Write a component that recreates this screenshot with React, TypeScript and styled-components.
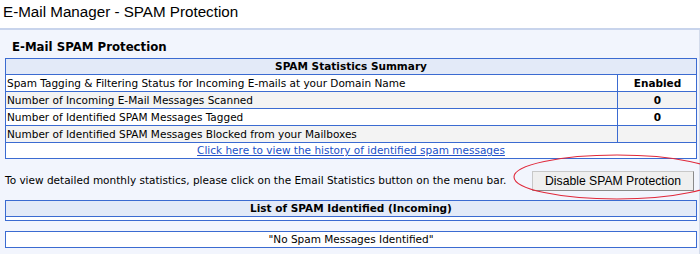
import React from 'react';
import styled, { createGlobalStyle } from 'styled-components';

const Global = createGlobalStyle`
  html, body { margin: 0; padding: 0; background: #fff; }
  body { font-family: "DejaVu Sans", Verdana, sans-serif; font-size: 10.5px; color: #000; }
`;

const Page = styled.div`
  width: 700px;
  height: 254px;
  overflow: hidden;
  display: flex;
  flex-direction: column;
`;

const Title = styled.h1`
  margin: 0;
  height: 30px;
  box-sizing: border-box;
  padding: 3px 0 0 3px;
  font: 15.2px/18px "Liberation Sans", Arial, sans-serif;
  color: #000;
  border-bottom: 2px solid #c8d4ec;
`;

const Panel = styled.div`
  flex: 1;
  background: #f2f5fd;
  padding: 0 2px 0 5px;
  border-right: 1px solid #d3dbeb;
  position: relative;
  display: flex;
  flex-direction: column;
`;

const Heading = styled.h2`
  margin: 10px 0 4px 7px;
  font: bold 11.75px/14px "DejaVu Sans", Verdana, sans-serif;
`;

const Table = styled.table<{ $mt?: number }>`
  width: 692px;
  border-collapse: collapse;
  margin-top: ${p => p.$mt ?? 0}px;
  border: 1px solid #3b6bd1;
  background: #fff;
`;

const HeadCell = styled.th`
  background: #e3eaf8;
  border: 1px solid #3b6bd1;
  height: 15px;
  padding: 0;
  font: bold 10.5px/15px "DejaVu Sans", Verdana, sans-serif;
  text-align: center;
`;

const Cell = styled.td<{ $gray?: boolean; $value?: boolean; $h?: number }>`
  background: ${p => (p.$gray ? '#f3f3f3' : '#fff')};
  border: 1px solid #3b6bd1;
  height: ${p => p.$h ?? 16}px;
  padding: 0 0 0 1px;
  line-height: 15px;
  font-weight: ${p => (p.$value ? 'bold' : 'normal')};
  text-align: ${p => (p.$value ? 'center' : 'left')};
  width: ${p => (p.$value ? '77px' : 'auto')};
`;

const LinkCell = styled.td`
  border: 1px solid #3b6bd1;
  height: 15px;
  padding: 0;
  line-height: 15px;
  text-align: center;
`;

const Link = styled.a`
  color: #2050c8;
  text-decoration: underline;
`;

const InfoRow = styled.div`
  display: flex;
  align-items: center;
  justify-content: space-between;
  height: 41px;
  padding: 0 3px 0 0;
`;

const InfoText = styled.span`
  font-size: 10.5px;
`;

const Button = styled.button`
  font: 12.2px "Liberation Sans", Arial, sans-serif;
  background: #efefef;
  border: 1px solid #8a8a8a;
  border-top-color: #c8c8c8;
  border-left-color: #c8c8c8;
  color: #000;
  padding: 0;
  width: 162px;
  height: 20px;
  margin-top: 2px;
`;

const Ellipse = styled.svg`
  position: absolute;
  left: 508px;
  top: 124px;
  overflow: visible;
  pointer-events: none;
`;

const rows = [
  { label: 'Spam Tagging & Filtering Status for Incoming E-mails at your Domain Name', value: 'Enabled' },
  { label: 'Number of Incoming E-Mail Messages Scanned', value: '0' },
  { label: 'Number of Identified SPAM Messages Tagged', value: '0' },
  { label: 'Number of Identified SPAM Messages Blocked from your Mailboxes', value: '' },
];

export default function App() {
  return (
    <Page>
      <Global />
      <Title>E-Mail Manager - SPAM Protection</Title>
      <Panel>
        <Heading>E-Mail SPAM Protection</Heading>
        <Table>
          <thead>
            <tr><HeadCell colSpan={2}>SPAM Statistics Summary</HeadCell></tr>
          </thead>
          <tbody>
            {rows.map((r, i) => (
              <tr key={i}>
                <Cell $gray={i % 2 === 1}>{r.label}</Cell>
                <Cell $gray={i % 2 === 1} $value>{r.value}</Cell>
              </tr>
            ))}
            <tr>
              <LinkCell colSpan={2}>
                <Link href="#">Click here to view the history of identified spam messages</Link>
              </LinkCell>
            </tr>
          </tbody>
        </Table>
        <InfoRow>
          <InfoText>To view detailed monthly statistics, please click on the Email Statistics button on the menu bar.</InfoText>
          <Button>Disable SPAM Protection</Button>
        </InfoRow>
        <Table>
          <thead>
            <tr><HeadCell>List of SPAM Identified (Incoming)</HeadCell></tr>
          </thead>
          <tbody>
            <tr><Cell $h={3} /></tr>
          </tbody>
        </Table>
        <Table $mt={10}>
          <tbody>
            <tr><LinkCell>"No Spam Messages Identified"</LinkCell></tr>
          </tbody>
        </Table>
        <Ellipse width="220" height="46">
          <ellipse cx="109" cy="23" rx="103" ry="22" fill="none" stroke="#e0283a" strokeWidth="1.1" />
        </Ellipse>
      </Panel>
    </Page>
  );
}
